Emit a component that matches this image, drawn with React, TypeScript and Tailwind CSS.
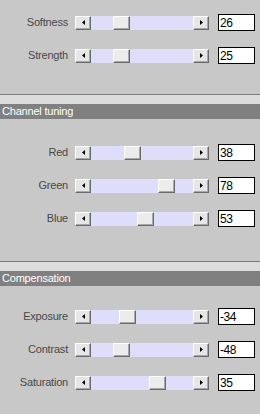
import React from "react";

type Row = { label: string; value: number; min: number; max: number };

const detail: Row[] = [
  { label: "Softness", value: 26, min: 0, max: 100 },
  { label: "Strength", value: 25, min: 0, max: 100 },
];

const channels: Row[] = [
  { label: "Red", value: 38, min: 0, max: 100 },
  { label: "Green", value: 78, min: 0, max: 100 },
  { label: "Blue", value: 53, min: 0, max: 100 },
];

const compensation: Row[] = [
  { label: "Exposure", value: -34, min: -100, max: 100 },
  { label: "Contrast", value: -48, min: -100, max: 100 },
  { label: "Saturation", value: 35, min: -100, max: 100 },
];

function Arrow({ dir }: { dir: "left" | "right" }) {
  return (
    <button className="flex h-[14px] w-[16px] items-center justify-center border-t border-l border-t-white border-l-white border-r border-b border-r-[#6a6a6a] border-b-[#6a6a6a] bg-[#e6e6e6] shadow-[inset_-1px_-1px_0_#a8a8a8]">
      <svg width="3" height="5" viewBox="0 0 3 5">
        {dir === "left" ? (
          <path d="M3 0 L0 2.5 L3 5 Z" fill="#000" />
        ) : (
          <path d="M0 0 L3 2.5 L0 5 Z" fill="#000" />
        )}
      </svg>
    </button>
  );
}

function Slider({ row }: { row: Row }) {
  const pos = Math.round(((row.value - row.min) / (row.max - row.min)) * 86);
  return (
    <div className="flex h-[14px] w-[134px] items-stretch">
      <Arrow dir="left" />
      <div className="relative flex-1 bg-[#dedefa]">
        <div
          className="absolute top-0 h-[14px] w-[17px] border-t border-l border-t-white border-l-white border-r border-b border-r-[#6a6a6a] border-b-[#6a6a6a] bg-[#ececec] shadow-[inset_-1px_-1px_0_#a8a8a8]"
          style={{ left: pos }}
        />
      </div>
      <Arrow dir="right" />
    </div>
  );
}

function SliderRow({ row }: { row: Row }) {
  return (
    <div className="flex h-[17px] items-center">
      <span className="w-[69px] pr-[1px] text-right text-[11px] tracking-[-0.2px] text-[#484848]">
        {row.label}
      </span>
      <div className="ml-[6px]">
        <Slider row={row} />
      </div>
      <div className="ml-[9px] flex h-[17px] w-[37px] items-center border border-black bg-white pl-[1px] text-[12px] tracking-[-0.4px] text-black">
        {row.value}
      </div>
    </div>
  );
}

function Header({ title }: { title: string }) {
  return (
    <>
      <div className="h-[1px] bg-[#7c7c7c]" />
      <div className="h-[9px] bg-[#dcdcdc]" />
      <div className="flex h-[15px] items-center bg-[#808080] pl-[2px] text-[11px] tracking-[-0.2px] text-white">
        {title}
      </div>
    </>
  );
}

export default function App() {
  return (
    <div
      className="h-[414px] w-[260px] overflow-hidden bg-[#c8c8c8]"
      style={{ fontFamily: '"Liberation Sans", Arial, sans-serif' }}
    >
      <div className="flex flex-col gap-[16px] pt-[14px] pb-[30px]">
        {detail.map((r) => (
          <SliderRow key={r.label} row={r} />
        ))}
      </div>

      <Header title="Channel tuning" />
      <div className="flex flex-col gap-[16px] pt-[25px] pb-[34px]">
        {channels.map((r) => (
          <SliderRow key={r.label} row={r} />
        ))}
      </div>

      <Header title="Compensation" />
      <div className="flex flex-col gap-[16px] pt-[22px]">
        {compensation.map((r) => (
          <SliderRow key={r.label} row={r} />
        ))}
      </div>
    </div>
  );
}
